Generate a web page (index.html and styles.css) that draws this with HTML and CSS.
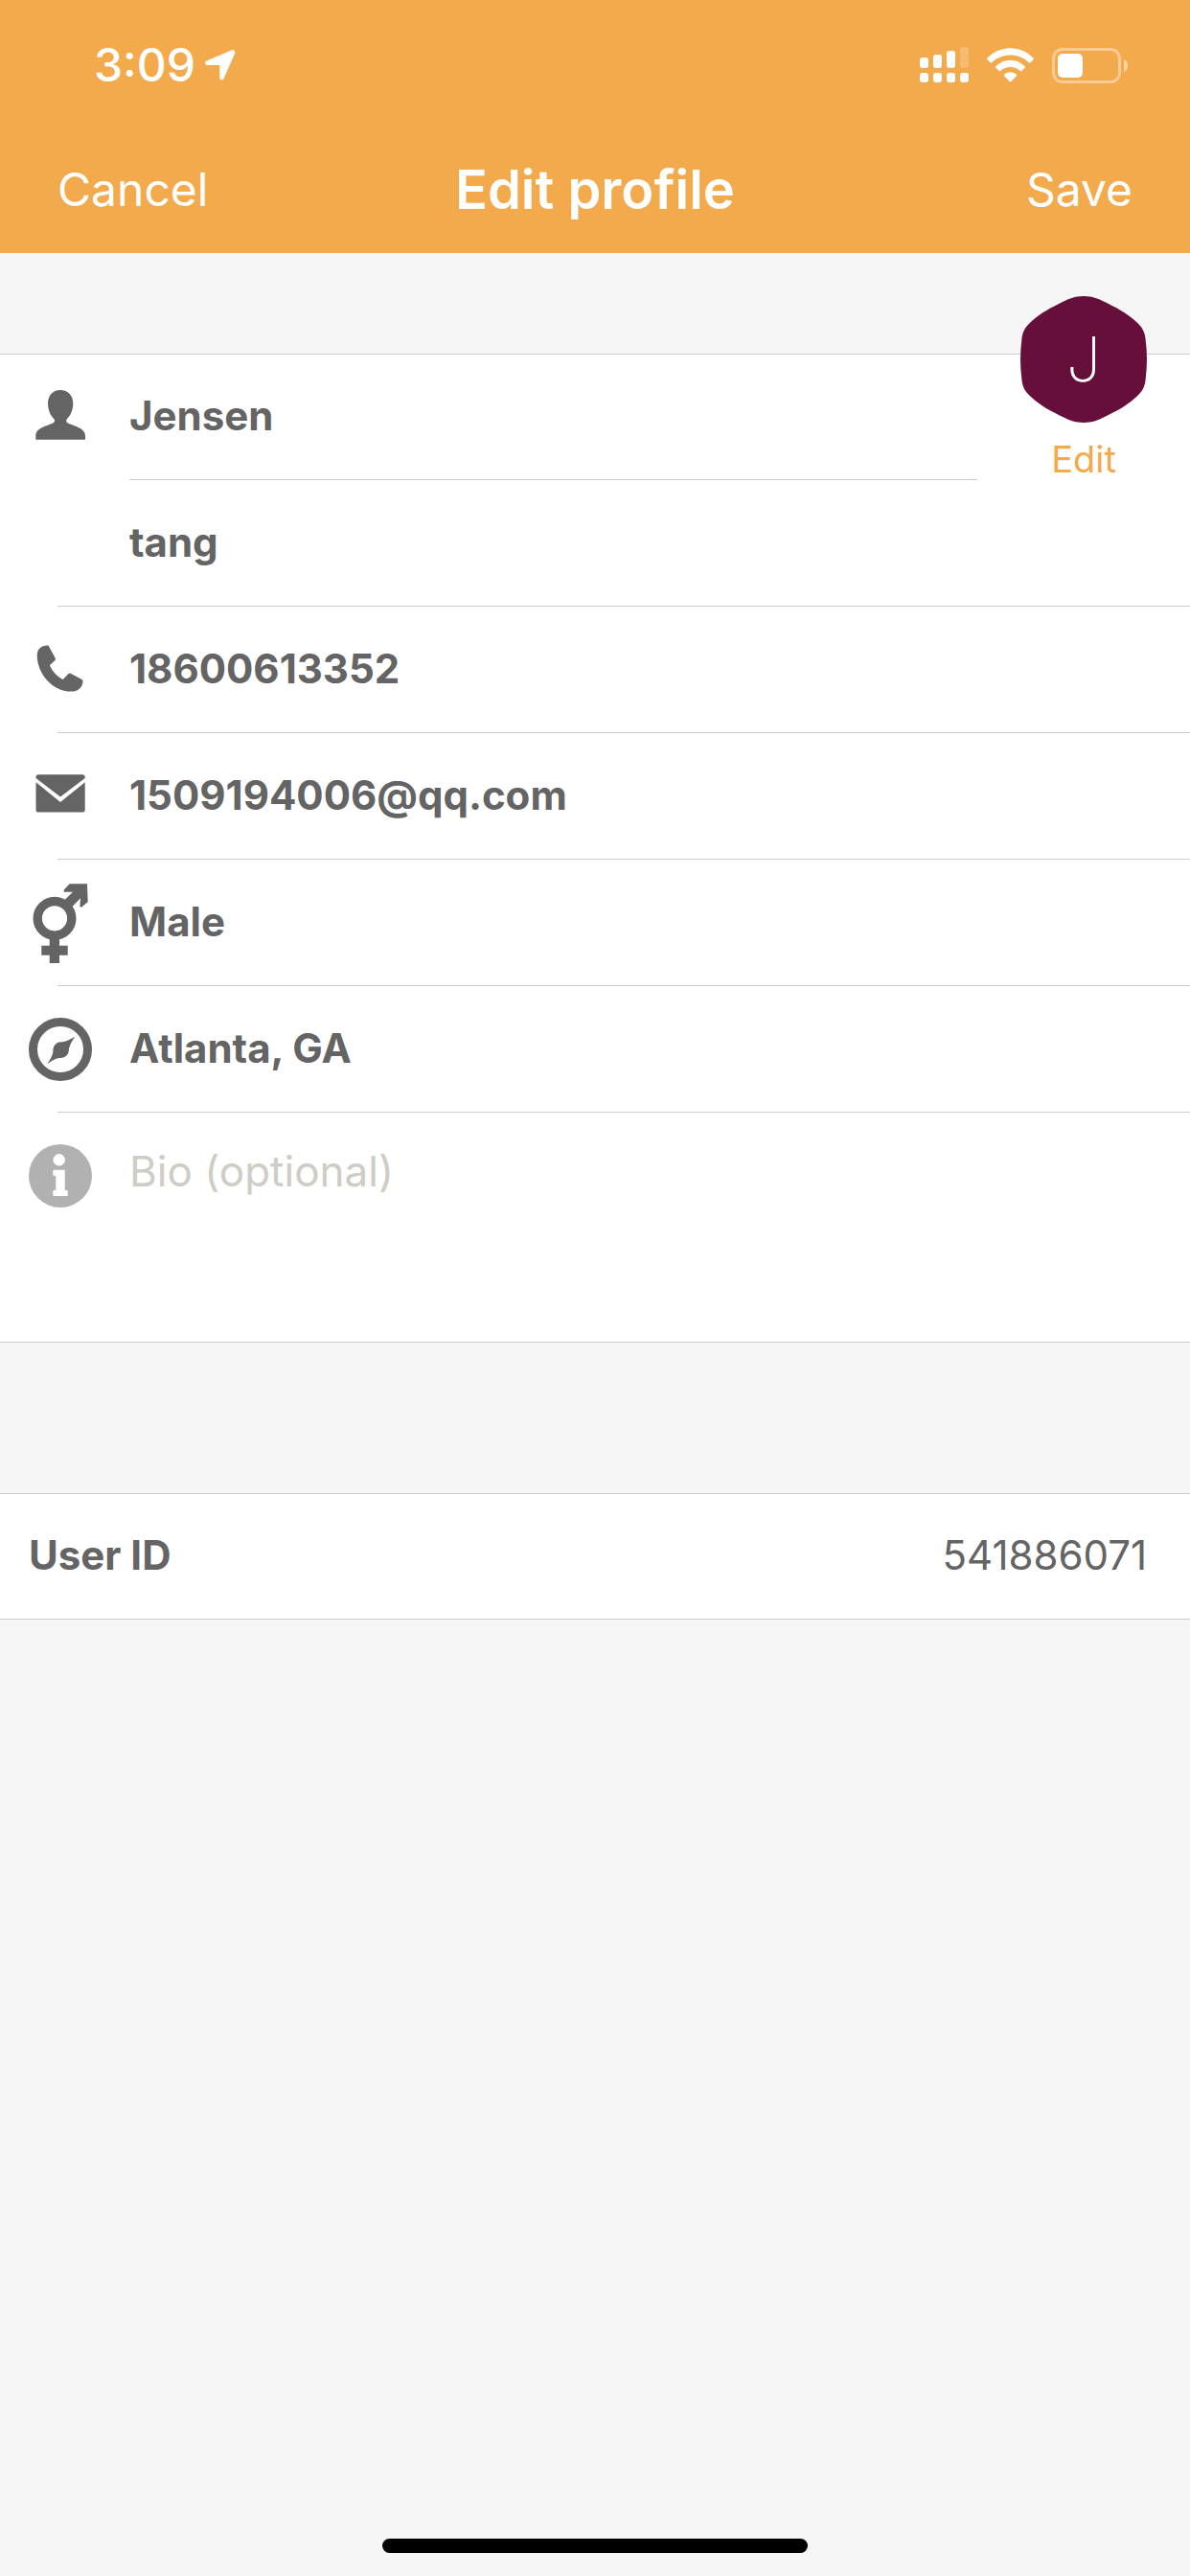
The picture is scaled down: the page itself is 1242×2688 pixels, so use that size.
FILE: index.html
```html
<!DOCTYPE html>
<html lang="en">
<head>
<meta charset="utf-8">
<meta name="viewport" content="width=device-width, initial-scale=1">
<title>Edit profile</title>
<link rel="stylesheet" href="styles.css">
</head>
<body>
<header class="header">
  <div class="status">
    <div class="status-left">
      <span class="time">3:09</span>
      <svg class="location" width="32" height="32" viewBox="0 0 32 32" aria-hidden="true"><path d="M28 .3 1.500 11.500C-.8 12.600-.2 16 2 16H14.500Q15.300 16 15.300 17V29C15.300 32 18.500 32.200 19.500 30L30.800 4.500C32 1.500 30.500-.6 28 .3Z" fill="#fff"/></svg>
    </div>
    <div class="status-right">
      <svg width="51" height="38" viewBox="0 0 51 38" fill="#fff" aria-hidden="true">
        <rect x="0" y="11" width="9" height="11" rx="3"/><rect x="14" y="8" width="9" height="14" rx="3"/><rect x="28" y="4" width="9" height="18" rx="3"/><rect x="42" y="0" width="9" height="22" rx="3" opacity=".2"/>
        <rect x="0" y="27" width="9" height="10" rx="3"/><rect x="14" y="27" width="9" height="10" rx="3"/><rect x="28" y="27" width="9" height="10" rx="3"/><rect x="42" y="27" width="9" height="10" rx="3"/>
      </svg>
      <svg width="49" height="36" viewBox="0 0 49 36" fill="#fff" aria-hidden="true">
        <path d="M.4 10.600C14-3.300 35-3.300 48.600 10.600Q49.300 11.300 48.600 12L45.200 15.400Q44.500 16 43.800 15.300C33 5 16 5 5.200 15.300Q4.500 16 3.800 15.400L.4 12Q-.3 11.300.4 10.600Z"/>
        <path d="M9.200 19.200C18 10.600 31 10.600 39.800 19.200Q40.500 19.900 39.800 20.600L36.400 24Q35.700 24.600 35 24C29 18.600 20 18.600 14 24Q13.300 24.600 12.600 24L9.200 20.600Q8.500 19.900 9.200 19.200Z"/>
        <path d="M18 27.900C22 24.300 27 24.300 31 27.900Q31.700 28.600 31 29.300L25.300 35Q24.500 35.800 23.700 35L18 29.300Q17.300 28.600 18 27.900Z"/>
      </svg>
      <svg width="79" height="37" viewBox="0 0 79 37" aria-hidden="true">
        <rect x="1.500" y="1.500" width="69" height="34" rx="9.500" fill="none" stroke="#fff" stroke-opacity=".4" stroke-width="3"/>
        <rect x="6" y="6" width="26" height="25" rx="5" fill="#fff"/>
        <path d="M75 12C80.300 14 80.300 23 75 25Z" fill="#fff" opacity=".5"/>
      </svg>
    </div>
  </div>
  <nav class="nav">
    <button class="nav-button" type="button">Cancel</button>
    <h1 class="title">Edit profile</h1>
    <button class="nav-button nav-save" type="submit" form="profile">Save</button>
  </nav>
</header>

<main class="main">
  <form class="card" id="profile">
    <div class="avatar">
      <div class="avatar-badge">
        <svg class="avatar-shape" width="132" height="132" viewBox="0 0 132 132" aria-hidden="true"><path d="M66 0C75 0 82 3 88 6C100 12 110 17 120 26C127 32 130 37 130.700 46C132.400 59 132.400 73 130.700 86C130 95 127 100 120 106C110 115 100 120 88 126C82 129 75 132 66 132C57 132 50 129 44 126C32 120 22 115 12 106C5 100 2 95 1.300 86C-.4 73-.4 59 1.300 46C2 37 5 32 12 26C22 17 32 12 44 6C50 3 57 0 66 0Z" fill="#650f3a"/></svg>
        <span class="avatar-letter">J</span>
      </div>
      <button class="avatar-edit" type="button">Edit</button>
    </div>

    <div class="row row-first">
      <label class="icon" for="first" aria-label="First name">
        <svg width="66" height="66" viewBox="0 0 66 66" fill="#646464"><path d="M33 4C25 4 20 10 20 18C20 25 23 31 26.300 34C27.800 36 27 37.500 25 38.500C18 42 7.300 43.500 7.300 52V55.700H59V52C59 43.500 48 42 41 38.500C39 37.500 38.500 36 40 34C43.300 31 46.300 25 46.300 18C46.300 10 41 4 33 4Z"/></svg>
      </label>
      <input class="field" id="first" value="Jensen">
    </div>
    <div class="row">
      <label class="icon" for="last" aria-label="Last name"></label>
      <input class="field" id="last" value="tang">
    </div>
    <div class="row">
      <label class="icon" for="phone" aria-label="Phone">
        <svg width="66" height="66" viewBox="0 0 66 66" fill="#646464"><path d="M19.500 7.600Q20.400 7.300 20.900 8.300L27.800 21Q28.300 22 27.500 22.900L22.500 27.500Q21.800 28.300 22.300 29.300C25 35 29.500 39.500 34.500 42.600Q35.500 43.200 36.200 42.500L41.500 37Q42.500 36 43.700 36.700L55.500 43Q56.800 43.800 56.500 45C56 51 52 55.600 45 55.600C24 56 8.700 36 8.700 18C9 11 13 7.800 19.500 7.600Z"/></svg>
      </label>
      <input class="field" id="phone" type="tel" value="18600613352">
    </div>
    <div class="row">
      <label class="icon" for="email" aria-label="Email">
        <svg width="66" height="66" viewBox="0 0 66 66" fill="#646464"><path d="M10 10.300H56Q58.700 10.300 58.700 13V14L33 33.500 7.500 14V13Q7.500 10.300 10 10.300Z"/><path d="M7.500 18.300 33 39 58.700 18.300V47Q58.700 49.600 56 49.600H10Q7.500 49.600 7.500 47Z"/></svg>
      </label>
      <input class="field" id="email" type="email" value="1509194006@qq.com">
    </div>
    <div class="row">
      <label class="icon" for="gender" aria-label="Gender">
        <svg width="66" height="84" viewBox="0 0 66 84" fill="#646464"><circle cx="27" cy="37.300" r="17.800" fill="none" stroke="#646464" stroke-width="9.400"/><path d="M21.700 58H32V65.700H40.700V75.700H32V84H21.700V75.700H13.300V65.700H21.700Z"/><path d="M42.700 1.300H61L61.700 20 55 25.700 53.300 25 54 16.300 42.500 28 35 20.500 46 9.700H36.700V7.500Z"/></svg>
      </label>
      <select class="field" id="gender"><option>Male</option><option>Female</option></select>
    </div>
    <div class="row">
      <label class="icon" for="city" aria-label="City">
        <svg width="66" height="66" viewBox="0 0 66 66" fill="#646464"><circle cx="33" cy="33" r="28.500" fill="none" stroke="#646464" stroke-width="9"/><circle cx="33.600" cy="33.600" r="8.300"/><path d="M48.300 19.700C45 24 43 28 41.700 33L34.500 25.500C39 25 43 22.500 48.300 19.700ZM19.700 48C22 43.500 25 40 25.500 34.500L33.500 41.700C28 42 24 45 19.700 48Z"/></svg>
      </label>
      <input class="field" id="city" value="Atlanta, GA">
    </div>
    <div class="row row-bio">
      <label class="icon" for="bio" aria-label="Bio">
        <svg width="66" height="66" viewBox="0 0 66 66"><circle cx="33" cy="33" r="33" fill="#b1b1b1"/><g fill="#fff"><circle cx="31.700" cy="16.300" r="6.200"/><path d="M26.300 26.700H37.700V48H39.700Q40.700 48 40.700 49V53Q40.700 54 39.700 54H26.300Q25.300 54 25.300 53V49Q25.300 48 26.300 48H28.300V33H26.300Q25.300 33 25.300 32V27.700Q25.300 26.700 26.300 26.700Z"/></g></svg>
      </label>
      <textarea class="field bio" id="bio" placeholder="Bio (optional)"></textarea>
    </div>
  </form>

  <dl class="account">
    <dt class="account-label">User ID</dt>
    <dd class="account-value">541886071</dd>
  </dl>
</main>

<footer class="home"><div class="home-bar"></div></footer>
</body>
</html>
```
FILE: styles.css
```css
* {
  box-sizing: border-box;
}

body {
  margin: 0;
  min-height: 100vh;
  display: flex;
  flex-direction: column;
  background: #f5f5f5;
  color: #646464;
  font-family: Inter, "Liberation Sans", sans-serif;
  font-size: 42px;
}

button,
input,
select,
textarea {
  margin: 0;
  padding: 0;
  border: 0;
  background: none;
  color: inherit;
  font: inherit;
}

.header {
  background: #f3aa4d;
  color: #fff;
}

.status {
  display: flex;
  justify-content: space-between;
  align-items: center;
  height: 136px;
  padding: 0 65px 0 98px;
}

.status-left {
  display: flex;
  align-items: center;
  gap: 10px;
}

.status-right {
  display: flex;
  align-items: center;
  gap: 19px;
}

.time {
  font-size: 48px;
  font-weight: 500;
  line-height: 56px;
}

.nav {
  display: grid;
  grid-template-columns: 1fr auto 1fr;
  align-items: center;
  height: 128px;
  padding: 0 60px 4px;
}

.nav-button {
  justify-self: start;
  font-size: 48px;
  line-height: 60px;
}

.nav-save {
  justify-self: end;
}

.title {
  margin: 0;
  font-size: 56px;
  font-weight: 600;
  line-height: 60px;
}

.main {
  flex: 1;
  padding-top: 105px;
}

.card {
  position: relative;
  border-bottom: 1px solid #ccc;
  background: #fff;
}

.row {
  position: relative;
  display: grid;
  grid-template-columns: 66px 1fr;
  column-gap: 39px;
  align-items: center;
  height: 132px;
  padding-left: 30px;
}

.row::after {
  content: "";
  position: absolute;
  left: 60px;
  right: 0;
  bottom: 0;
  height: 1px;
  background: #ccc;
}

.row-first {
  border-top: 1px solid #ccc;
  padding-right: 222px;
}

.row-first::after {
  left: 135px;
  right: 222px;
}

.row-bio {
  align-items: start;
  height: 239px;
}

.row-bio::after {
  display: none;
}

.row-bio .icon {
  padding-top: 33px;
}

.icon svg {
  display: block;
}

.field {
  width: 100%;
  height: 130px;
  padding-bottom: 4px;
  outline: 0;
  appearance: none;
  font-weight: 700;
}

.bio {
  height: 238px;
  padding-top: 37px;
  font-size: 44px;
  line-height: 48px;
  font-weight: 400;
  resize: none;
}

.bio::placeholder {
  color: #cecdc5;
  opacity: 1;
}

/* The avatar straddles the card's top edge. */
.avatar {
  position: absolute;
  top: -60px;
  right: 45px;
  z-index: 1;
  display: flex;
  flex-direction: column;
  align-items: center;
  gap: 16px;
}

.avatar-badge {
  display: grid;
  place-items: center;
}

.avatar-shape,
.avatar-letter {
  grid-area: 1 / 1;
}

.avatar-letter {
  color: #fff;
  font-size: 64px;
  font-weight: 200;
  line-height: 64px;
}

.avatar-edit {
  color: #f3aa4d;
  font-size: 38px;
  line-height: 44px;
}

.account {
  display: flex;
  justify-content: space-between;
  align-items: center;
  height: 132px;
  margin: 157px 0 0;
  padding: 0 45px 4px 30px;
  border-top: 1px solid #ccc;
  border-bottom: 1px solid #ccc;
  background: #fff;
}

.account-label {
  font-weight: 700;
}

.account-value {
  margin: 0;
}

.home {
  display: flex;
  justify-content: center;
  padding-bottom: 24px;
}

.home-bar {
  width: 444px;
  height: 15px;
  border-radius: 8px;
  background: #000;
}
```
